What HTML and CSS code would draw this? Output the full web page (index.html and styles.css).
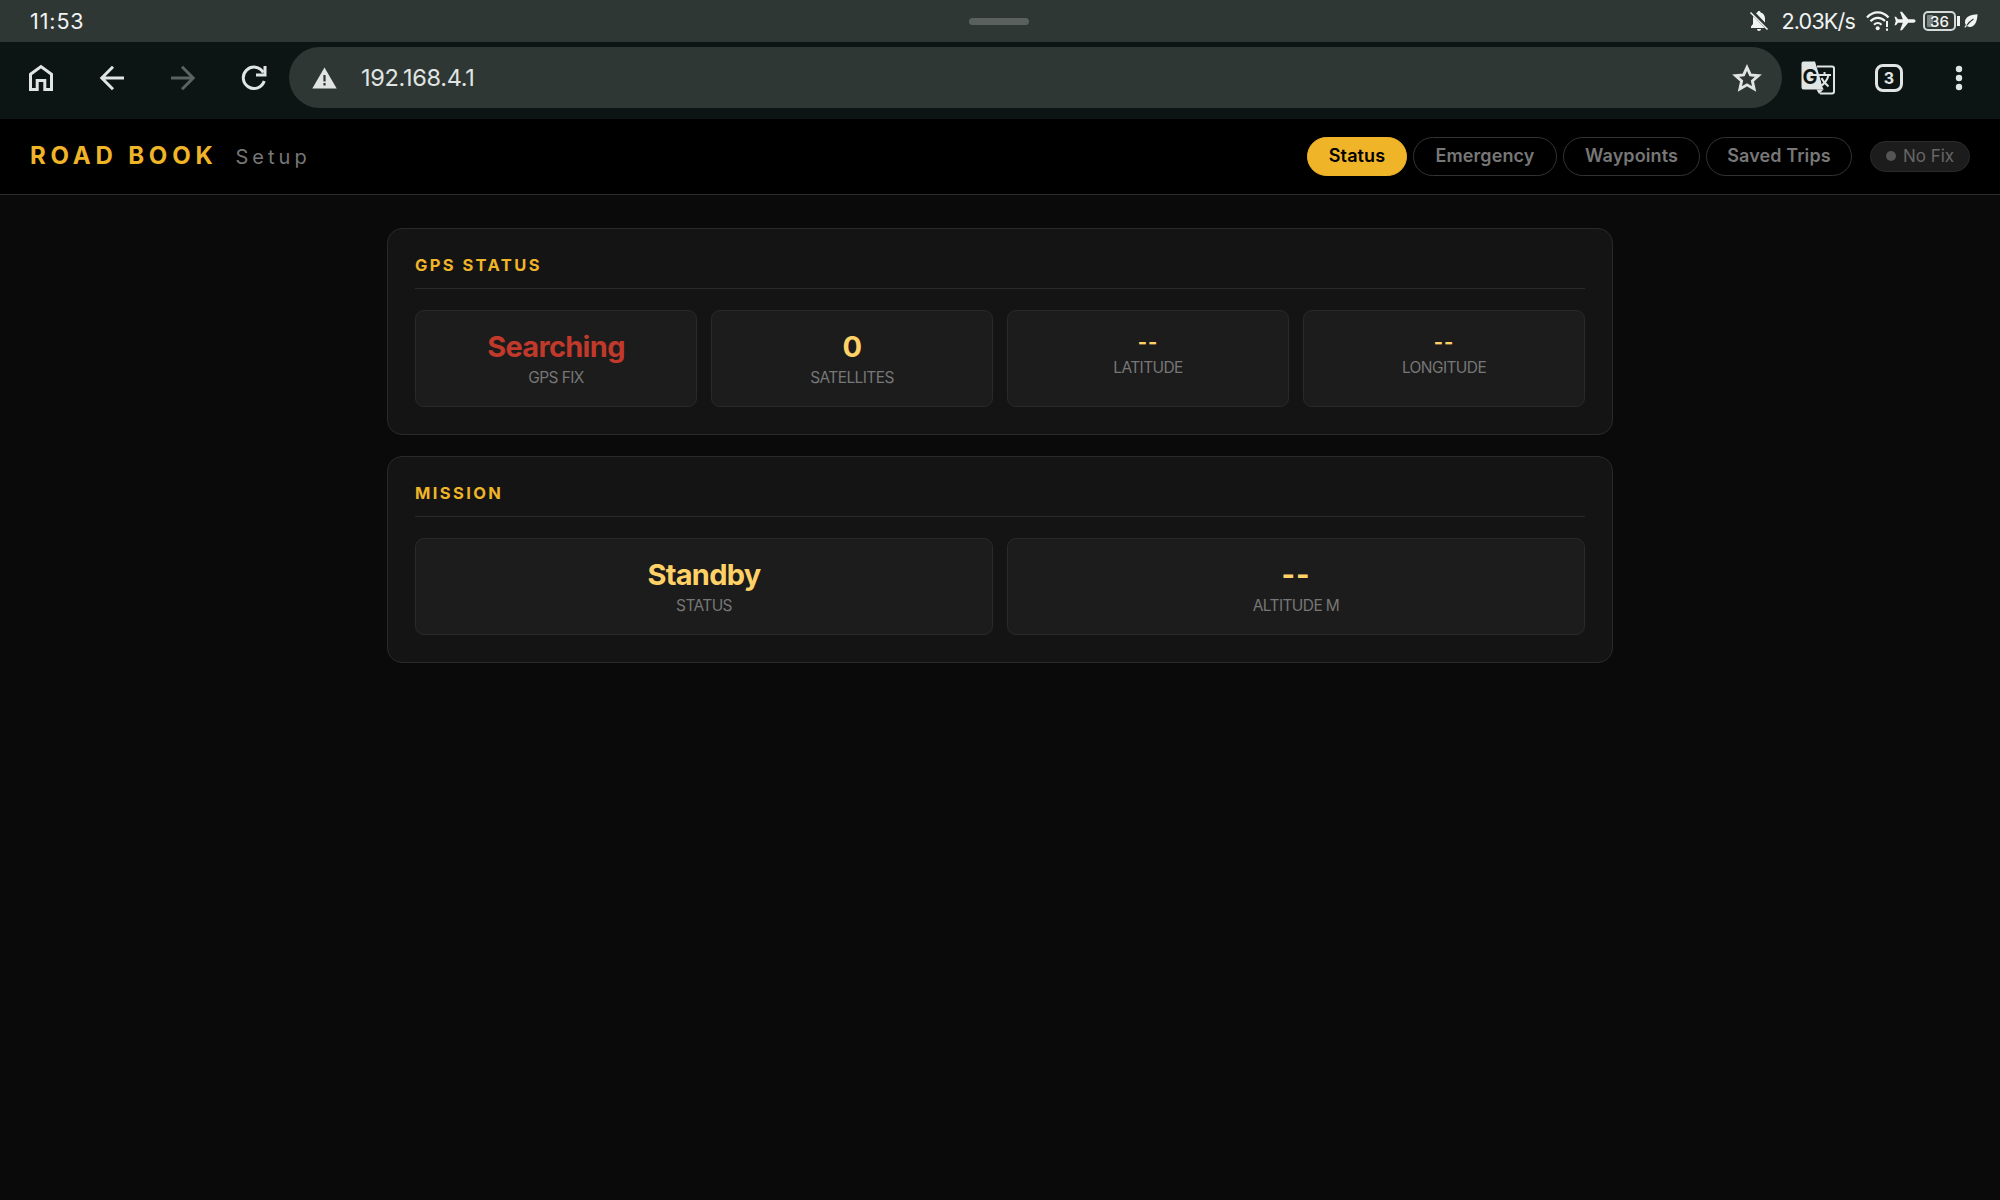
FILE: index.html
```
<!DOCTYPE html>
<html lang="en">
<head>
    <meta charset="UTF-8">
    <meta name="viewport" content="width=device-width, initial-scale=1.0">
    <title>Road Book Setup</title>
    <link rel="stylesheet" href="styles.css">
</head>
<body>
    <!-- Tablet status bar -->
    <div class="status-bar">
        <span class="clock">11:53</span>
        <span class="handle"></span>
        <div class="status-icons">
            <svg class="bell" width="20" height="22" viewBox="0 0 20 22">
                <path d="M10 1c-1 0-1.600.6-1.600 1.500C5.500 3.300 4 5.600 4 8.500V14l-2 2.500V18h16v-1.500L16 14V8.500c0-2.900-1.500-5.200-4.400-6C11.600 1.600 11 1 10 1zM8 19h4c0 1.200-.9 2-2 2s-2-.8-2-2z" fill="#f1f4f3"/>
                <path d="M2.500 1.500l16.500 17" stroke="#2f3735" stroke-width="4"/>
                <path d="M1.500 2.500l17 17" stroke="#f1f4f3" stroke-width="1.600"/>
            </svg>
            <span class="speed">2.03K/s</span>
            <svg class="wifi" width="24" height="22" viewBox="0 0 24 22">
                <g fill="none" stroke="#f1f4f3" stroke-width="2.200">
                    <path d="M1 7.500C7 .6 16.500.6 22.500 7.500"/>
                    <path d="M4.500 11.300c4-4.600 10.500-4.600 14.500-.3"/>
                    <path d="M8 14.800c2.200-2.400 5.300-2.400 7.500 0"/>
                </g>
                <circle cx="11.700" cy="18.300" r="2" fill="#f1f4f3"/>
                <path d="M21 11v6M21 18.500v2.300" stroke="#f1f4f3" stroke-width="2"/>
            </svg>
            <svg class="plane" width="22" height="20" viewBox="0 0 22 20">
                <path d="M21.500 10c0-1-.8-1.700-2-1.700h-5.300L8 .8H6l2.800 7.500H4L2 5.800H.5L1.800 10 .5 14.200H2l2-2.500h4.800L6 19.200h2l6.200-7.500h5.300c1.200 0 2-.7 2-1.700z" fill="#f1f4f3"/>
            </svg>
            <span class="battery"><span>36</span></span>
            <span class="battery-tip"></span>
            <svg class="leaf" width="14" height="14" viewBox="0 0 14 14">
                <path d="M13.500.3C8 .6 1 2.300 1 8c0 1.400.4 2.300 1 3L.4 13l.8.8L2.800 12c5.800 3 10.500-1.700 10.700-11.700z" fill="#f1f4f3"/>
                <path d="M2.800 11.500C4.500 8.800 6.500 6.900 9.500 5" stroke="#2f3735" stroke-width="1.100" fill="none"/>
            </svg>
        </div>
    </div>

    <!-- Browser toolbar -->
    <div class="toolbar">
        <svg class="icon home" width="26" height="28" viewBox="0 0 26 28">
            <path d="M2.500 10.300L13 2.500l10.500 7.800v15.200h-6.700v-9H9.200v9H2.500z" fill="none" stroke="#e0e5e3" stroke-width="3"/>
        </svg>
        <svg class="icon back" width="26" height="26" viewBox="0 0 26 26">
            <path d="M25 13H3M14 1.800L2.800 13 14 24.200" fill="none" stroke="#e0e5e3" stroke-width="3"/>
        </svg>
        <svg class="icon forward" width="26" height="26" viewBox="0 0 26 26">
            <path d="M1 13h22M12 1.800L23.200 13 12 24.200" fill="none" stroke="#5b6260" stroke-width="3"/>
        </svg>
        <svg class="icon reload" width="26" height="26" viewBox="0 0 26 26">
            <path d="M22.300 7.500A10.700 10.700 0 1 0 23.200 16" fill="none" stroke="#e0e5e3" stroke-width="3"/>
            <path d="M25.500 1v10.500H15v-3h7.500V1z" fill="#e0e5e3"/>
        </svg>
        <div class="address-bar">
            <svg width="25" height="22" viewBox="0 0 25 22">
                <path d="M12.500.5L24.700 21.500H.3z" fill="#e0e5e3"/>
                <path d="M12.500 8v6.500M12.500 16v2.500" stroke="#2f3735" stroke-width="2.200"/>
            </svg>
            <span class="url">192.168.4.1</span>
            <svg class="star" width="30" height="28" viewBox="0 0 30 28">
                <path d="M15 3.500l3.400 7.400 8 .8-6 5.300 1.700 7.900-7.100-4.100-7.100 4.100L9.600 17l-6-5.300 8-.8z" fill="none" stroke="#e0e5e3" stroke-width="2.900"/>
            </svg>
        </div>
        <svg class="translate" width="34" height="34" viewBox="0 0 34 34">
            <path d="M16 5.500h15a2 2 0 0 1 2 2v23a2 2 0 0 1-2 2H19" fill="none" stroke="#e0e5e3" stroke-width="2"/>
            <path d="M2.500.5H14l8.500 28H2.500a2 2 0 0 1-2-2v-24a2 2 0 0 1 2-2z" fill="#e0e5e3"/>
            <path d="M15.500 28.500h7l-4.500 4.500z" fill="#e0e5e3"/>
            <path d="M18.500 13.500h4l3 10-4 3z" fill="#0d1514"/>
            <path d="M18 14h12M23.500 11v3M27.500 14c-1 5-4 8.500-8 11.500M20.500 17c1.500 3.500 4 6 7 8.500" fill="none" stroke="#e0e5e3" stroke-width="2"/>
            <text class="translate-g" x="1.500" y="22.500">G</text>
        </svg>
        <span class="tab-count">3</span>
        <svg class="more" width="8" height="26" viewBox="0 0 8 26">
            <g fill="#e0e5e3">
                <circle cx="4" cy="4" r="3.200"/>
                <circle cx="4" cy="13" r="3.200"/>
                <circle cx="4" cy="22" r="3.200"/>
            </g>
        </svg>
    </div>

    <header class="header">
        <h1>ROAD BOOK</h1>
        <span class="subtitle">Setup</span>
        <nav class="nav">
            <button class="tab-status active">Status</button>
            <button class="tab-emergency">Emergency</button>
            <button class="tab-waypoints">Waypoints</button>
            <button class="tab-trips">Saved Trips</button>
        </nav>
        <div class="fix-badge"><span class="dot"></span>No Fix</div>
    </header>

    <main class="container">
        <section class="card">
            <h2>GPS STATUS</h2>
            <div class="stats four">
                <div class="stat">
                    <div class="value error">Searching</div>
                    <div class="label">GPS FIX</div>
                </div>
                <div class="stat">
                    <div class="value">0</div>
                    <div class="label">SATELLITES</div>
                </div>
                <div class="stat">
                    <div class="value small">--</div>
                    <div class="label">LATITUDE</div>
                </div>
                <div class="stat">
                    <div class="value small">--</div>
                    <div class="label">LONGITUDE</div>
                </div>
            </div>
        </section>

        <section class="card">
            <h2>MISSION</h2>
            <div class="stats two">
                <div class="stat">
                    <div class="value">Standby</div>
                    <div class="label">STATUS</div>
                </div>
                <div class="stat">
                    <div class="value dashes">--</div>
                    <div class="label">ALTITUDE M</div>
                </div>
            </div>
        </section>
    </main>
</body>
</html>
```
FILE: styles.css
```
* {
    box-sizing: border-box;
}
body {
    margin: 0;
    min-height: 100vh;
    background-color: #0a0a0a;
    font-family: Inter, "Noto Sans", sans-serif;
}
svg {
    display: block;
    flex: none;
}

/* Status bar */
.status-bar {
    display: grid;
    grid-template-columns: 1fr 60px 1fr;
    align-items: center;
    height: 42px;
    padding: 0 22px 0 20px;
    background-color: #2f3735;
    color: #f1f4f3;
}
.clock {
    margin-left: 10px;
    font-size: 21.500px;
    letter-spacing: 0.9px;
}
.handle {
    height: 7px;
    border-radius: 4px;
    background-color: #5a605e;
}
.status-icons {
    display: flex;
    align-items: center;
    justify-content: flex-end;
}
.speed {
    margin-left: 12px;
    font-size: 21.500px;
    letter-spacing: -0.8px;
}
.wifi {
    margin-left: 11px;
}
.plane {
    margin-left: 4px;
}
.battery {
    display: flex;
    align-items: center;
    justify-content: center;
    width: 33px;
    height: 20px;
    margin-left: 7px;
    border: 2px solid #d5dad8;
    border-radius: 5px;
    background: linear-gradient(90deg, #7c8280 8px, transparent 8px);
    background-clip: content-box;
    padding: 2px;
    font-size: 15px;
    font-weight: 500;
}
.battery-tip {
    width: 3px;
    height: 10px;
    margin-left: 1px;
    background-color: #f1f4f3;
}
.leaf {
    margin-left: 4px;
}

/* Browser toolbar */
.toolbar {
    display: flex;
    align-items: center;
    height: 77px;
    padding: 5px 37px 11px 28px;
    background-color: #0d1514;
}
.back,
.forward,
.reload {
    margin-left: 45px;
}
.address-bar {
    display: flex;
    flex: 1;
    align-items: center;
    height: 61px;
    margin-left: 22px;
    padding: 0 20px 0 23px;
    border-radius: 31px;
    background-color: #2f3735;
    color: #e0e5e3;
}
.url {
    margin-left: 24px;
    font-size: 23.500px;
    letter-spacing: -0.3px;
}
.star {
    margin-left: auto;
}
.translate {
    margin-left: 19px;
}
.translate-g {
    fill: #0d1514;
    font-size: 20px;
    font-weight: 700;
}
.tab-count {
    display: flex;
    align-items: center;
    justify-content: center;
    width: 28px;
    height: 28px;
    margin-left: 40px;
    border: 3px solid #e0e5e3;
    border-radius: 8px;
    color: #e0e5e3;
    font-size: 16px;
    font-weight: 700;
}
.more {
    margin-left: 52px;
}

/* Page header */
.header {
    display: flex;
    align-items: center;
    height: 76px;
    padding: 0 30px;
    border-bottom: 1px solid #2a2a2a;
    background-color: #000;
}
h1 {
    margin: 0 0 2px;
    color: #f0b429;
    font-size: 24px;
    font-weight: 700;
    letter-spacing: 4.800px;
}
.subtitle {
    margin-left: 18px;
    color: #777;
    font-size: 20px;
    letter-spacing: 4px;
}
.nav {
    display: flex;
    gap: 6px;
    margin-left: auto;
}
.nav button {
    height: 39px;
    padding: 0 0 2px;
    border: 1px solid #333;
    border-radius: 20px;
    background: none;
    color: #777;
    font-family: inherit;
    font-size: 18px;
    font-weight: 600;
    letter-spacing: 0.1px;
}
.nav .tab-status {
    width: 100px;
}
.nav .tab-emergency {
    width: 144px;
}
.nav .tab-waypoints {
    width: 137px;
}
.nav .tab-trips {
    width: 146px;
}
.nav .active {
    border-color: #f0b429;
    background-color: #f0b429;
    color: #000;
}
.fix-badge {
    display: flex;
    align-items: center;
    justify-content: center;
    gap: 7px;
    width: 100px;
    height: 31px;
    margin-left: 18px;
    padding-bottom: 1px;
    border: 1px solid #2a2a2a;
    border-radius: 16px;
    background-color: #1c1c1c;
    color: #666;
    font-size: 17px;
}
.dot {
    width: 10px;
    height: 10px;
    border-radius: 50%;
    background-color: #555;
}

/* Cards */
.container {
    display: flex;
    flex-direction: column;
    gap: 21px;
    width: 1226px;
    margin: 0 auto;
    padding-top: 33px;
}
.card {
    height: 207px;
    padding: 27px;
    border: 1px solid #2a2a2a;
    border-radius: 15px;
    background-color: #141414;
}
h2 {
    height: 33px;
    margin: 0 0 21px;
    border-bottom: 1px solid #2a2a2a;
    color: #f0b429;
    font-size: 16.500px;
    font-weight: 700;
    line-height: 18px;
    letter-spacing: 2.400px;
}
.stats {
    display: grid;
    gap: 14px;
}
.four {
    grid-template-columns: repeat(4, 1fr);
}
.two {
    grid-template-columns: repeat(2, 1fr);
}
.stat {
    height: 97px;
    padding-top: 18px;
    border: 1px solid #2a2a2a;
    border-radius: 9px;
    background-color: #1c1c1c;
    text-align: center;
}
.value {
    height: 36px;
    color: #ffd166;
    font-size: 29px;
    font-weight: 700;
    line-height: 36px;
    letter-spacing: -0.7px;
}
.value.small {
    height: 26px;
    font-size: 20px;
    line-height: 26px;
    letter-spacing: 0.8px;
}
.value.dashes {
    letter-spacing: 1px;
}
.value.error {
    color: #c0392b;
}
.label {
    color: #777;
    font-size: 15.500px;
    line-height: 25px;
    letter-spacing: -0.6px;
}
```
